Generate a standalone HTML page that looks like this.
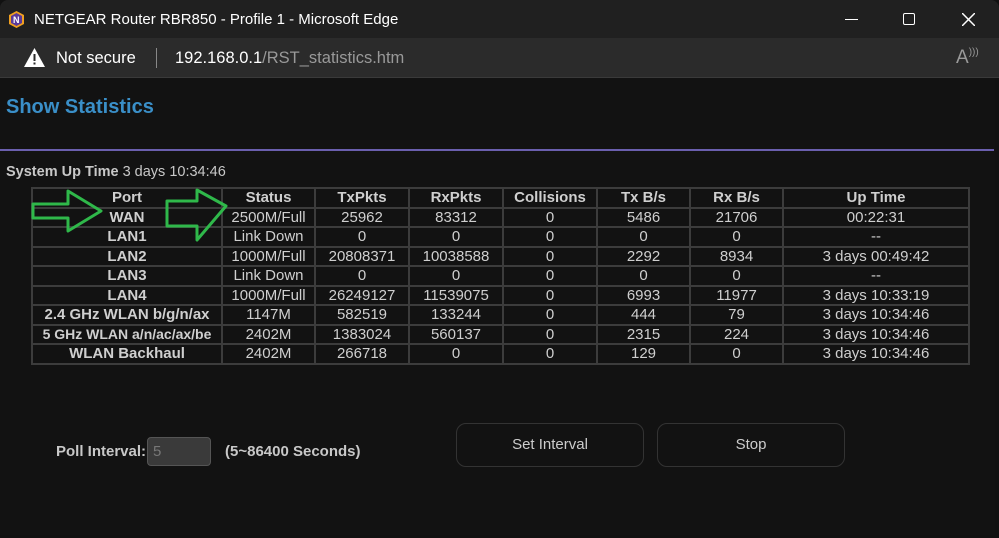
<!DOCTYPE html>
<html><head><style>
*{margin:0;padding:0;box-sizing:border-box}
body{width:999px;height:538px;background:#111;overflow:hidden;font-family:"Liberation Sans",Arial,sans-serif;position:relative}
#tb{position:absolute;left:0;top:0;width:999px;height:38px;background:#202020;border-radius:8px 8px 0 0}
#ab{position:absolute;left:0;top:38px;width:999px;height:40px;background:#2b2b2b;border-bottom:1px solid #3a3a3a}
.t{position:absolute;color:#fff;font-size:15px;white-space:nowrap}
#ct{position:absolute;left:0;top:78px;width:995px;height:457px;background:#121212}
h1{position:absolute;left:6px;top:96px;color:#3a8fc8;font-size:20px;font-weight:bold}
#ln{position:absolute;left:0;top:149px;width:994px;height:2px;background:#6a5fae}
#up{position:absolute;left:6px;top:164px;color:#c8c8c8;font-size:14.5px}
table{position:absolute;left:31px;top:187px;border-collapse:collapse;color:#cfcfcf;font-size:15px}
td{border:2px solid #3c3c3c;height:19.5px;text-align:center;padding:0;line-height:15px;white-space:nowrap}
td:first-child,tr:first-child td{font-weight:bold}
.btn{position:absolute;top:423px;height:44px;border:1px solid #333;border-radius:10px;background:#121212;color:#ccc;font-size:15px;text-align:center;line-height:42px}
</style></head><body>
<div id="tb">
<svg style="position:absolute;left:8px;top:11px" width="17" height="17" viewBox="0 0 17 17"><polygon points="8.5,0 16,4 16,13 8.5,17 1,13 1,4" fill="#f0a020"/><polygon points="8.5,2 14,5 14,12 8.5,15 3,12 3,5" fill="#5a3a9a"/><text x="5" y="12" font-size="9" fill="#fff" font-weight="bold" font-family="Liberation Sans">N</text></svg>
<div class="t" style="left:34px;top:11px;font-size:15px">NETGEAR Router RBR850 - Profile 1 - Microsoft Edge</div>
<div style="position:absolute;left:845px;top:19px;width:13px;height:1px;background:#fff"></div>
<div style="position:absolute;left:903px;top:13px;width:12px;height:12px;border:1.5px solid #fff;border-radius:2px"></div>
<svg style="position:absolute;left:962px;top:13px" width="13" height="13"><path d="M0 0L13 13M13 0L0 13" stroke="#fff" stroke-width="1.5"/></svg>
</div>
<div id="ab">
<svg style="position:absolute;left:24px;top:10px" width="21" height="19"><polygon points="10.5,0 21,19 0,19" fill="#fff"/><rect x="9.5" y="6" width="2" height="7" fill="#2b2b2b"/><rect x="9.5" y="14.5" width="2" height="2" fill="#2b2b2b"/></svg>
<div class="t" style="left:56px;top:11px;font-size:16.5px">Not secure</div>
<div style="position:absolute;left:156px;top:10px;width:1px;height:20px;background:#888"></div>
<div class="t" style="left:175px;top:11px;font-size:16.5px">192.168.0.1<span style="color:#999">/RST_statistics.htm</span></div>
<div class="t" style="left:956px;top:9px;font-size:19px;color:#999">A<span style="font-size:10px;vertical-align:top">)))</span></div>
</div>
<div id="ct"></div>
<h1>Show Statistics</h1>
<div id="ln"></div>
<div id="up"><b>System Up Time</b> 3 days 10:34:46</div>
<table>
<tr><td style="width:190px">Port</td><td style="width:93px">Status</td><td style="width:94px">TxPkts</td><td style="width:94px">RxPkts</td><td style="width:94px">Collisions</td><td style="width:93px">Tx B/s</td><td style="width:93px">Rx B/s</td><td style="width:186px">Up Time</td></tr>
<tr><td>WAN</td><td>2500M/Full</td><td>25962</td><td>83312</td><td>0</td><td>5486</td><td>21706</td><td>00:22:31</td></tr>
<tr><td>LAN1</td><td>Link Down</td><td>0</td><td>0</td><td>0</td><td>0</td><td>0</td><td>--</td></tr>
<tr><td>LAN2</td><td>1000M/Full</td><td>20808371</td><td>10038588</td><td>0</td><td>2292</td><td>8934</td><td>3 days 00:49:42</td></tr>
<tr><td>LAN3</td><td>Link Down</td><td>0</td><td>0</td><td>0</td><td>0</td><td>0</td><td>--</td></tr>
<tr><td>LAN4</td><td>1000M/Full</td><td>26249127</td><td>11539075</td><td>0</td><td>6993</td><td>11977</td><td>3 days 10:33:19</td></tr>
<tr><td>2.4 GHz WLAN b/g/n/ax</td><td>1147M</td><td>582519</td><td>133244</td><td>0</td><td>444</td><td>79</td><td>3 days 10:34:46</td></tr>
<tr><td style="font-size:14px">5 GHz WLAN a/n/ac/ax/be</td><td>2402M</td><td>1383024</td><td>560137</td><td>0</td><td>2315</td><td>224</td><td>3 days 10:34:46</td></tr>
<tr><td>WLAN Backhaul</td><td>2402M</td><td>266718</td><td>0</td><td>0</td><td>129</td><td>0</td><td>3 days 10:34:46</td></tr>
</table>
<svg style="position:absolute;left:30px;top:188px" width="200" height="58"><path d="M3 16H38V3L71 23L38 43V30H3Z" fill="none" stroke="#2fb84a" stroke-width="3" stroke-linejoin="round"/><path d="M137 13H167V2L196 18L167 52V38H137Z" fill="none" stroke="#2fb84a" stroke-width="3" stroke-linejoin="round"/></svg>
<div style="position:absolute;left:56px;top:443px;color:#c8c8c8;font-size:15px;font-weight:bold">Poll Interval:</div>
<div style="position:absolute;left:147px;top:437px;width:64px;height:29px;background:#3a3a3a;border:1px solid #555;border-radius:4px;color:#777;font-size:15px;padding:5px 5px">5</div>
<div style="position:absolute;left:225px;top:443px;color:#c8c8c8;font-size:15px;font-weight:bold">(5~86400 Seconds)</div>
<div class="btn" style="left:456px;width:188px">Set Interval</div>
<div class="btn" style="left:657px;width:188px">Stop</div>
</body></html>
